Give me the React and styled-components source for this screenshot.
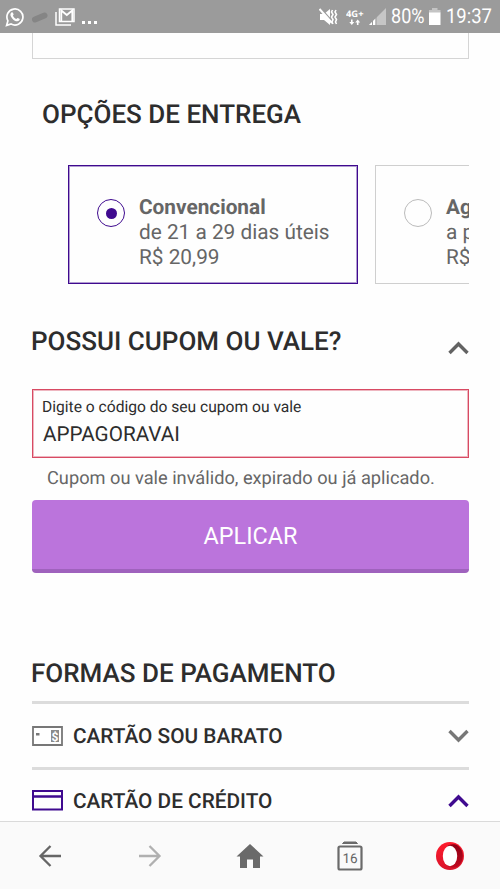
import React from 'react';
import styled, {createGlobalStyle} from 'styled-components'

const PURPLE = '#3f0a8f';

const App = () => {
    return (
        <Screen>
            <GlobalStyle/>
            <StatusBar>
                <StatusGroup>
                    <WhatsAppIcon/>
                    <PillIcon/>
                    <MailIcon/>
                    <Dots><i/><i/><i/></Dots>
                </StatusGroup>
                <StatusGroup>
                    <MuteIcon/>
                    <NetworkIcon/>
                    <SignalIcon/>
                    <StatusText $width={33} $scale={0.88}>80%</StatusText>
                    <BatteryIcon/>
                    <StatusText $width={46} $scale={0.9}>19:37</StatusText>
                </StatusGroup>
            </StatusBar>

            <Content>
                <PreviousBox/>

                <DeliveryHeading>OPÇÕES DE ENTREGA</DeliveryHeading>
                <DeliveryList>
                    <DeliveryCard $active>
                        <Radio $active/>
                        <DeliveryText>
                            <strong>Convencional</strong>
                            <span>de 21 a 29 dias úteis</span>
                            <span>R$ 20,99</span>
                        </DeliveryText>
                    </DeliveryCard>
                    <DeliveryCard>
                        <Radio/>
                        <DeliveryText>
                            <strong>Agendada</strong>
                            <span>a partir de</span>
                            <span>R$ 20,99</span>
                        </DeliveryText>
                    </DeliveryCard>
                </DeliveryList>

                <CouponHeader>
                    <Heading>POSSUI CUPOM OU VALE?</Heading>
                    <CouponToggle><Chevron color="#636363" up/></CouponToggle>
                </CouponHeader>
                <CouponField>
                    <CouponLabel>Digite o código do seu cupom ou vale</CouponLabel>
                    <CouponValue>APPAGORAVAI</CouponValue>
                </CouponField>
                <CouponError>Cupom ou vale inválido, expirado ou já aplicado.</CouponError>
                <ApplyButton>APLICAR</ApplyButton>

                <PaymentHeading>FORMAS DE PAGAMENTO</PaymentHeading>
                <PaymentRow>
                    <StoreCardIcon/>
                    <PaymentName>CARTÃO SOU BARATO</PaymentName>
                    <Chevron color="#777"/>
                </PaymentRow>
                <PaymentRow>
                    <CreditCardIcon/>
                    <PaymentName>CARTÃO DE CRÉDITO</PaymentName>
                    <Chevron color={PURPLE} up/>
                </PaymentRow>
            </Content>

            <BrowserBar>
                <NavItem><BackIcon/></NavItem>
                <NavItem><ForwardIcon/></NavItem>
                <NavItem><HomeIcon/></NavItem>
                <NavItem><TabsIcon/></NavItem>
                <NavItem><OperaIcon/></NavItem>
            </BrowserBar>
        </Screen>
    )
};

export default App

const Chevron = ({color, up}) => (
    <svg width="21" height="14" viewBox="0 0 21 14" fill="none" stroke={color} strokeWidth="3.4">
        <path d={up ? 'M1.5 12 10.5 3l9 9' : 'M1.5 2l9 9 9-9'}/>
    </svg>
);

const WhatsAppIcon = () => (
    <svg width="20" height="20" viewBox="0 0 20 20">
        <path d="M1.6 18.4l1.3-4.6a8 8 0 1 1 3.2 3.2z" fill="none" stroke="#fff" strokeWidth="1.7"/>
        <path
            d="M6.4 5.6c.5-.6 1.2-.5 1.5.1l.7 1.6c.1.5-.6 1.1-.7 1.4.8 1.6 1.9 2.6 3.4 3.2.4 0 .9-1.1 1.4-1l1.7.9c.5.3.3 1.2-.2 1.7-2 1.7-4.7.2-6.6-1.6-1.7-1.7-3.2-4.5-1.2-6.3z"
            fill="#fff"
        />
    </svg>
);

const PillIcon = () => (
    <svg width="18" height="14" viewBox="0 0 18 14">
        <path d="M4 9.5 13.5 5.5" stroke="#858585" strokeWidth="6" strokeLinecap="round"/>
    </svg>
);

const MailIcon = () => (
    <svg width="20" height="18" viewBox="0 0 20 18" fill="none" stroke="#fff">
        <path d="M1 4v13h15" strokeWidth="1.5"/>
        <path d="M4.5 1h14.5v12.5h-14.5z" strokeWidth="1.5"/>
        <path d="M6.3 13V2.5l5.5 4.5 5.5-4.5V13" strokeWidth="1.8"/>
    </svg>
);

const MuteIcon = () => (
    <svg width="19" height="18" viewBox="0 0 19 18">
        <path d="M1 6h4l6-5v16l-6-5H1z" fill="#fff"/>
        <path d="M1.5 0 14 14" stroke="#9b9b9b" strokeWidth="1.5"/>
        <path d="M.5 1 13 15" stroke="#fff" strokeWidth="2"/>
        <path d="M13.5 2l-1 2 1.5 2.5L12.5 9l1.5 2.5-1 2.5 1 2M17 2l-1 2 1.5 2.5L16 9l1.5 2.5-1 2.5 1 2"
              fill="none" stroke="#fff" strokeWidth="1.6"/>
    </svg>
);

const NetworkIcon = () => (
    <svg width="18" height="20" viewBox="0 0 18 20">
        <text x="0" y="9.5" fill="#fff" fontFamily="'Open Sans', sans-serif" fontSize="9" fontWeight="700"
              textLength="17.5" lengthAdjust="spacingAndGlyphs">4G+</text>
        <path d="M5 12.5h1.6v2.5h1.7l-2.5 3-2.5-3H5zM10.9 18h1.6v-2.5h1.7l-2.5-3-2.5 3h1.7z" fill="#fff"/>
    </svg>
);

const SignalIcon = () => (
    <svg width="17" height="17" viewBox="0 0 17 17">
        <path d="M0 17 17 0v17z" fill="#c6c6c6"/>
        <path d="M0 17l3-3v3zM4 17v-4l2.5-2.5V17z" fill="#fff"/>
        <path d="M3.5 13v4M7 9v8" stroke="#9b9b9b"/>
    </svg>
);

const BatteryIcon = () => (
    <svg width="12" height="17" viewBox="0 0 12 17">
        <path d="M3 0h5.5v2H11.5v3H0V2h3z" fill="#c4c4c4"/>
        <path d="M0 4.5h11.5V17H0z" fill="#fff"/>
    </svg>
);

const StoreCardIcon = () => (
    <svg width="31" height="20" viewBox="0 0 31 20">
        <path d="M1 1h29v18H1z" fill="#fff" stroke="#777" strokeWidth="1.8"/>
        <path d="M4 7h3.5v2.5H4z" fill="#777"/>
        <path d="M19 4h8v12h-8z" fill="#8b8b8b"/>
        <text x="23" y="14.5" textAnchor="middle" fill="#fff" fontFamily="Roboto, sans-serif" fontSize="12"
              fontWeight="700">$</text>
    </svg>
);

const CreditCardIcon = () => (
    <svg width="31" height="23" viewBox="0 0 31 23">
        <path d="M1 1h29v18.5H1z" fill="none" stroke={PURPLE} strokeWidth="2"/>
        <path d="M1 6.5h29" stroke={PURPLE} strokeWidth="2.5"/>
    </svg>
);

const BackIcon = () => (
    <svg width="24" height="24" viewBox="0 0 24 24" fill="none" stroke="#666" strokeWidth="2.3">
        <path d="M23 12H2.5M12.5 2 2.5 12l10 10"/>
    </svg>
);

const ForwardIcon = () => (
    <svg width="24" height="24" viewBox="0 0 24 24" fill="none" stroke="#b0b0b0" strokeWidth="2.3">
        <path d="M1 12h20.5M11.5 2l10 10-10 10"/>
    </svg>
);

const HomeIcon = () => (
    <svg width="28" height="24" viewBox="0 0 28 24">
        <path d="M14 0l13.5 12.5H24V24h-7v-8.5h-6V24H4V12.5H.5z" fill="#6a6a6a"/>
    </svg>
);

const TabsIcon = () => (
    <svg width="26" height="30" viewBox="0 0 26 30">
        <path d="M5.5 2.5 7 1h12l1.5 1.5z" fill="#6a6a6a" stroke="#6a6a6a"/>
        <rect x="1.5" y="5.5" width="23" height="23" rx="1.5" fill="none" stroke="#6a6a6a" strokeWidth="2.2"/>
        <text x="13" y="21.7" textAnchor="middle" fill="#666" fontFamily="Roboto, sans-serif" fontSize="13.5">16</text>
    </svg>
);

const OperaIcon = () => (
    <svg width="28" height="28" viewBox="0 0 28 28">
        <defs>
            <linearGradient id="ring" x1="0" y1="0" x2="0" y2="1">
                <stop offset="0" stopColor="#ff1b2d"/>
                <stop offset="1" stopColor="#d9142a"/>
            </linearGradient>
            <linearGradient id="shade" x1="0" y1="0" x2="0" y2="1">
                <stop offset="0" stopColor="#8e0014"/>
                <stop offset="1" stopColor="#c00a20"/>
            </linearGradient>
        </defs>
        <circle cx="14" cy="14" r="14" fill="url(#ring)"/>
        <path d="M11 4.5C14 1.8 18.5 1.5 22 3.7a13.5 13.5 0 0 1 0 20.6c-3.5 2.2-8 1.9-11-.8z" fill="url(#shade)"/>
        <ellipse cx="14" cy="14" rx="7.2" ry="10.2" fill="#fff"/>
    </svg>
);

const GlobalStyle = createGlobalStyle`
    body {
        margin: 0;
        background: #fff;
        font-family: Roboto, sans-serif;
        text-rendering: geometricPrecision;
    }
`;

const Screen = styled.div`
    display: flex;
    flex-direction: column;
    width: 500px;
    height: 889px;
    overflow: hidden;
    background: #fefefe;
    color: #2d2d2d;
`;

const StatusBar = styled.header`
    display: flex;
    justify-content: space-between;
    flex: none;
    height: 33px;
    box-sizing: border-box;
    padding: 0 8px 0 5px;
    background: #9b9b9b;
`;

const StatusGroup = styled.div`
    display: flex;
    align-items: center;
    gap: 5px;

    &:first-child {
        gap: 6px;
    }

    &:last-child svg:first-child {
        margin-right: 3px;
    }
`;

const Dots = styled.span`
    display: flex;
    gap: 3px;
    margin: 11px 0 0 1px;

    i {
        width: 3px;
        height: 3px;
        background: #fff;
    }
`;

//the system font is narrower than the page one
const StatusText = styled.span`
    width: ${({$width}) => $width}px;
    padding-top: 2px;
    font-size: 20.5px;
    line-height: 33px;
    color: #fff;
    white-space: nowrap;
    transform: scaleX(${({$scale}) => $scale});
    transform-origin: left;
`;

const Content = styled.main`
    flex: 1;
    min-height: 0;
    overflow: hidden;
    padding: 0 31px 0 32px;
`;

const PreviousBox = styled.div`
    height: 25px;
    border: 1px solid #d5d5d5;
    border-top: 0;
`;

const Heading = styled.h2`
    margin: 0 0 0 -1px;
    font-size: 26px;
    font-weight: 500;
    line-height: 30px;
    white-space: nowrap;
`;

const DeliveryHeading = styled(Heading)`
    padding: 41px 0 0 11px;
`;

const DeliveryList = styled.div`
    display: flex;
    gap: 17px;
    margin-top: 35px;
    padding-left: 36px;
    overflow: hidden;
`;

const DeliveryCard = styled.div`
    display: flex;
    flex: none;
    gap: 14px;
    width: 290px;
    height: 119px;
    box-sizing: border-box;
    padding: 28px;
    border: 1px solid ${({$active}) => $active ? PURPLE : '#cfcfcf'};
    box-shadow: ${({$active}) => $active ? 'inset 0 0 0 1px rgba(63, 10, 143, .4)' : 'none'};
`;

const Radio = styled.span`
    display: flex;
    align-items: center;
    justify-content: center;
    flex: none;
    width: 28px;
    height: 28px;
    margin-top: 5px;
    box-sizing: border-box;
    border: 1px solid ${({$active}) => $active ? PURPLE : '#bbb'};
    border-radius: 50%;

    &::after {
        content: '';
        width: 11px;
        height: 11px;
        border-radius: 50%;
        background: ${({$active}) => $active ? PURPLE : 'transparent'};
    }
`;

const DeliveryText = styled.div`
    display: flex;
    flex-direction: column;
    padding-top: 2px;
    font-size: 20.8px;
    line-height: 25px;
    white-space: nowrap;
    color: #666;
`;

const CouponHeader = styled.div`
    display: flex;
    justify-content: space-between;
    margin-top: 43px;
`;

const CouponToggle = styled.span`
    display: flex;
    padding-top: 14px;
`;

const CouponField = styled.div`
    height: 69px;
    margin-top: 32px;
    padding: 7px 9px;
    box-sizing: border-box;
    border: 1px solid #d84a63;
    box-shadow: inset 0 0 0 1px rgba(216, 74, 99, .4);
`;

const CouponLabel = styled.div`
    font-size: 15.6px;
    line-height: 20px;
`;

const CouponValue = styled.div`
    padding: 4px 0 0 1px;
    font-size: 20.7px;
    line-height: 28px;
`;

const CouponError = styled.p`
    margin: 9px 0 0 15px;
    font-size: 18.23px;
    line-height: 24px;
    white-space: nowrap;
    color: #666;
`;

const ApplyButton = styled.button`
    display: block;
    width: 100%;
    height: 73px;
    margin-top: 9px;
    padding: 2px 0 0;
    border: 0;
    border-bottom: 4px solid #9f62bd;
    border-radius: 4px;
    background: #bb74dc;
    color: #fff;
    font-family: inherit;
    font-size: 23.4px;
`;

const PaymentHeading = styled(Heading)`
    margin-top: 86px;
`;

const PaymentRow = styled.div`
    display: flex;
    align-items: center;
    gap: 10px;
    height: 65.5px;
    box-sizing: border-box;
    padding-top: 1px;
    border-top: 3px solid #dcdcdc;

    ${PaymentHeading} + & {
        margin-top: 12px;
    }
`;

const PaymentName = styled.span`
    flex: 1;
    padding-top: 2px;
    font-size: 20.8px;
    font-weight: 500;
    line-height: 26px;
    white-space: nowrap;
`;

const BrowserBar = styled.nav`
    display: flex;
    flex: none;
    height: 68px;
    box-sizing: border-box;
    border-top: 1px solid #dadada;
    background: #fafafa;
`;

const NavItem = styled.span`
    display: flex;
    align-items: center;
    justify-content: center;
    flex: 1;
`;
